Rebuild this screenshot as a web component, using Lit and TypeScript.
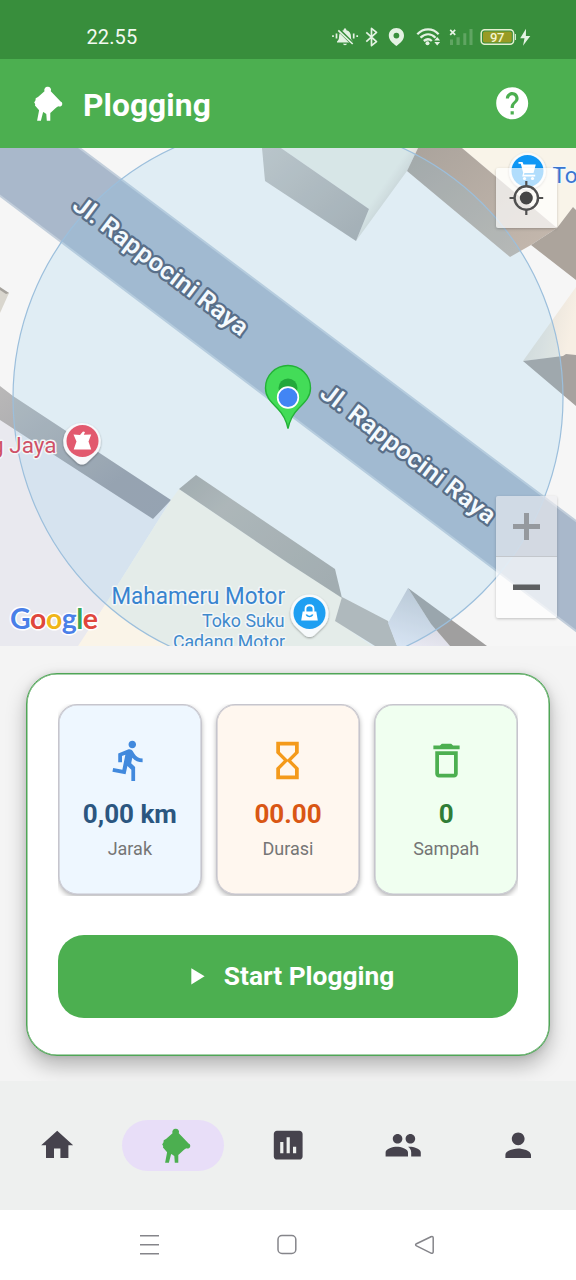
import { LitElement, html, css, svg } from "lit";
import { customElement, property } from "lit/decorators.js";

const PLOGGER =
  "M13.8 2.200a3.200 3.200 0 0 1 3.200 4.400L26.800 17c1.300.3 1.900 1.500 1.600 2.800-.4 1.800-2.300 2.600-3.900 1.800l-2 1.400-6 5.400v7.700h-3.500l-.5-6.600-2.900-2.200-.4.5-2.100 8.300H3.300L5.300 25.600 1.200 20.800l.2-1.300-1-1.700 1.300-2.200.2-1.900 2.300-1.400 6.500-5.700a3.200 3.200 0 0 1 3.100-4.400z";

const ICONS: Record<string, string> = {
  run: "M13.49 5.48c1.1 0 2-.9 2-2s-.9-2-2-2-2 .9-2 2 .9 2 2 2zm-3.6 13.9l1-4.4 2.1 2v6h2v-7.500l-2.1-2 .6-3c1.300 1.500 3.300 2.500 5.500 2.500v-2c-1.900 0-3.500-1-4.300-2.400l-1-1.600c-.4-.6-1-1-1.700-1-.3 0-.5.1-.8.1l-5.200 2.200v4.700h2v-3.400l1.800-.7-1.600 8.100-4.900-1-.4 2 7 1.400z",
  hourglass: "M6 2v6h.01L6 8.010 10 12l-4 4 .01.01H6V22h12v-5.990h-.01L18 16l-4-4 4-3.990-.01-.01H18V2H6zm10 14.500V20H8v-3.500l4-4 4 4zm-4-5l-4-4V4h8v3.500l-4 4z",
  trash: "M6 19c0 1.100.9 2 2 2h8c1.100 0 2-.9 2-2V7H6v12zM8 9h8v10H8V9zm7.500-5l-1-1h-5l-1 1H5v2h14V4z",
  home: "M10 20v-6h4v6h5v-8h3L12 3 2 12h3v8z",
  chart: "M19 3H5c-1.100 0-2 .9-2 2v14c0 1.100.9 2 2 2h14c1.100 0 2-.9 2-2V5c0-1.100-.9-2-2-2zM9 17H7v-7h2v7zm4 0h-2V7h2v10zm4 0h-2v-4h2v4z",
  people: "M16.5 11c1.660 0 2.990-1.340 2.990-3S18.160 5 16.500 5c-1.660 0-3 1.340-3 3s1.340 3 3 3zm-8 0c1.660 0 2.990-1.340 2.990-3S10.160 5 8.500 5c-1.660 0-3 1.340-3 3s1.340 3 3 3zm-.5 2c-2.330 0-7 1.170-7 3.500V19h14v-2.500c0-2.330-4.670-3.500-7-3.500zm8 0c-.29 0-.62.02-.97.05 1.160.84 1.970 1.970 1.970 3.450V19h6v-2.500c0-2.330-4.670-3.500-7-3.500z",
  person: "M12 12c2.210 0 4-1.790 4-4s-1.790-4-4-4-4 1.790-4 4 1.790 4 4 4zm0 2c-2.670 0-8 1.340-8 4v2h16v-2c0-2.660-5.330-4-8-4z",
  help: "M12 2C6.480 2 2 6.480 2 12s4.480 10 10 10 10-4.480 10-10S17.520 2 12 2zm1 17h-2v-2h2v2zm2.070-7.750l-.9.92C13.450 12.900 13 13.500 13 15h-2v-.5c0-1.100.45-2.100 1.170-2.830l1.240-1.260c.37-.36.59-.86.59-1.410 0-1.100-.9-2-2-2s-2 .9-2 2H8c0-2.210 1.790-4 4-4s4 1.790 4 4c0 .88-.36 1.680-.93 2.250z",
};

@customElement("ui-icon")
class UiIcon extends LitElement {
  @property() name = "";
  static styles = css`
    :host { display: block; width: 38.4px; height: 38.4px; }
    svg { display: block; width: 100%; height: 100%; fill: currentColor; }
  `;
  render() {
    return this.name === "plogger"
      ? html`<svg viewBox="-7.800 -.6 38.400 38.400"><path d=${PLOGGER}></path></svg>`
      : html`<svg viewBox="0 0 24 24"><path d=${ICONS[this.name]}></path></svg>`;
  }
}

@customElement("status-bar")
class StatusBar extends LitElement {
  static styles = css`
    :host {
      display: flex; justify-content: space-between; align-items: center;
      box-sizing: border-box; height: 59px; padding: 15px 44px 0 86.500px;
      background: #388e3c; color: #f2faf1; font: 400 20px Roboto, sans-serif;
    }
    .time { letter-spacing: 0.1px; }
    svg { display: block; }
    .pct { font: 500 13px Roboto, sans-serif; fill: #f2f6d0; }
  `;
  render() {
    return html`<span class="time">22.55</span>
      <svg width="202" height="24" viewBox="330 25 202 24" fill="#e4f2e3">
        <path d="M337 41.500c1.500-1.200 2-2.300 2-4.500 0-4 1.600-6 4.600-6.800 0-2.700 2.800-2.700 2.800 0 3 .8 4.600 2.800 4.600 6.800 0 2.200.5 3.300 2 4.500v.9h-16zM343 43.800h4c-.4 1.900-3.600 1.900-4 0z"></path>
        <path d="M338.500 29.500l14.500 14.500" stroke="#388e3c" stroke-width="3.600"></path>
        <path d="M338.300 30.300l14.400 13.700M336.500 33.500v5M333 35.300v1.600M353.700 33.500v5M357.200 35.300v1.600" stroke="#e4f2e3" stroke-width="1.700" fill="none"></path>
        <path d="M366.300 32.300l10.200 9.300-5 4V28.400l5 4-10.200 9.300" stroke="#e4f2e3" stroke-width="1.700" fill="none" stroke-linejoin="round"></path>
        <path fill-rule="evenodd" d="M396.400 28c-4.400 0-7.600 3.200-7.600 7.500 0 4.800 4 7.600 7.600 10.500 3.600-2.900 7.600-5.700 7.600-10.500 0-4.300-3.200-7.500-7.600-7.500zm0 4.700a2.900 2.900 0 1 1 0 5.800 2.900 2.900 0 0 1 0-5.800z"></path>
        <g fill="none" stroke="#e4f2e3" stroke-width="2.300"><path d="M417.300 34.200c6.300-6.400 15.400-6.400 21.300 0M420.500 37.700c4.800-4.500 10.500-4.500 15 0M423.800 41c3-2.500 5.500-2.500 8 0"></path></g>
        <circle cx="427.500" cy="43.300" r="2"></circle>
        <path stroke="#388e3c" stroke-width="1" paint-order="stroke" d="M434.300 40.500l2.900-3.500 2.900 3.500zM434.300 42l2.900 3.500 2.900-3.500z"></path>
        <path d="M450.200 29.800l5 5m0-5l-5 5" stroke="#e4f2e3" stroke-width="1.700"></path>
        <path fill="#60a562" d="M450 39.500h3v5.500h-3zM456.500 37.300h3.200V45h-3.200zM463.300 33.200h3V45h-3zM469.500 29h3v16h-3z"></path>
        <rect x="481.200" y="29.700" width="32.400" height="14.600" rx="3.500" fill="none" stroke="#e6f0d0" stroke-width="1.500"></rect>
        <rect x="483" y="31.500" width="28.800" height="11" rx="1.800" fill="#989b25"></rect>
        <path d="M514.900 34h1v6h-1z"></path>
        <text class="pct" x="497.200" y="41.700" text-anchor="middle" textLength="14.500">97</text>
        <path d="M526 28.800l-5.800 9.400h4.300l-1.500 7.500 7.300-9.800h-4.400z"></path>
      </svg>`;
  }
}

@customElement("app-bar")
class AppBar extends LitElement {
  static styles = css`
    :host {
      display: flex; align-items: center; box-sizing: border-box;
      height: 89px; padding: 0 45px 0 26px; background: #4caf50; color: #fff;
    }
    h1 { flex: 1; margin: 3px 0 0 18.500px; font: 700 31.700px Roboto, sans-serif; letter-spacing: 0.1px; }
  `;
  render() {
    return html`<ui-icon name="plogger"></ui-icon><h1>Plogging</h1><ui-icon name="help"></ui-icon>`;
  }
}

@customElement("map-view")
class MapView extends LitElement {
  static styles = css`
    :host { display: block; position: relative; height: 498px; overflow: hidden; background: #f6f6f6; }
    .canvas { display: block; width: 576px; height: 498px; }
    .street { font: 600 25px Roboto, sans-serif; fill: #f4fafe; stroke: #596f89; stroke-width: 4.500px; stroke-linejoin: round; paint-order: stroke; }
    .place { font-family: Roboto, sans-serif; stroke: #f3f7f8; stroke-width: 3px; stroke-linejoin: round; paint-order: stroke; }
    .logo { font: 700 28.500px Lato, sans-serif; stroke: #fff; stroke-width: 3px; stroke-linejoin: round; paint-order: stroke; }
    .control { position: absolute; right: 19px; width: 61px; box-shadow: 0 1px 3px rgba(0, 0, 0, 0.22); border-radius: 2px; overflow: hidden; }
    .control svg { display: block; }
    .locate { top: 20px; height: 60px; background: rgba(255, 255, 255, 0.68); }
    .zoom { top: 348px; height: 122px; }
    .in { height: 60px; background: rgba(238, 238, 240, 0.62); border-bottom: 1px solid #c3c7cc; }
    .out { height: 61px; background: rgba(255, 255, 255, 0.7); }
  `;
  render() {
    return html`
      <svg class="canvas" viewBox="0 148 576 498">
        <defs>
          <linearGradient id="wallA" x1="0" y1="0" x2="1" y2="1"><stop offset="0" stop-color="#c6c5c3"></stop><stop offset="1" stop-color="#aaa9a9"></stop></linearGradient>
          <linearGradient id="wallB" x1="0" y1="0" x2="1" y2="1"><stop offset="0" stop-color="#aaa39c"></stop><stop offset="1" stop-color="#c6b9ae"></stop></linearGradient>
          <linearGradient id="wallC" x1="0" y1="0" x2="1" y2="1"><stop offset="0" stop-color="#b9b8b8"></stop><stop offset=".7" stop-color="#9c9ca4"></stop><stop offset="1" stop-color="#9a9ba5"></stop></linearGradient>
          <linearGradient id="wallE" x1="0" y1="0" x2="1" y2=".8"><stop offset="0" stop-color="#a8a6a2"></stop><stop offset=".3" stop-color="#b7b3ae"></stop><stop offset="1" stop-color="#aaa8a4"></stop></linearGradient>
          <linearGradient id="roofC" x1="0" y1="0" x2="1" y2=".3"><stop offset="0" stop-color="#dcdad5"></stop><stop offset="1" stop-color="#f7efe4"></stop></linearGradient>
          <linearGradient id="roofG" x1=".6" y1="0" x2=".3" y2="1"><stop offset="0" stop-color="#c5c8d0"></stop><stop offset="1" stop-color="#e9e9f3"></stop></linearGradient>
          <linearGradient id="edge" gradientUnits="userSpaceOnUse" x1="387" y1="201" x2="377" y2="194"><stop offset="0" stop-color="#dcdcd7"></stop><stop offset="1" stop-color="#ebede6"></stop></linearGradient>
          <filter id="lift" x="-30%" y="-30%" width="160%" height="160%"><feDropShadow dx="0" dy="1" stdDeviation="1.200" flood-opacity=".35"></feDropShadow></filter>
        </defs>
        <path fill="#a9b8cb" stroke="#c2cedb" stroke-width="2" d="M-5 140H69l515 387v110L-5 192z"></path>

        <path fill="url(#edge)" d="M281 148l88 61-13 32 51-70 11-23z"></path>
        <path fill="url(#wallA)" d="M262 148l3 33 91 60 13-32-88-61z"></path>
        <path fill="#f9f4e9" d="M462 148l95 80 16-21 3 2v-61z"></path>
        <path fill="url(#wallB)" d="M418 148l-11 23 103 86 21-12 26-17-95-80z"></path>
        <path fill="#aca49c" d="M531 245l26-17 16-21 3 3v70z"></path>
        <path fill="url(#roofC)" d="M523 361l53-74v68z"></path>
        <path fill="#a6a29f" d="M523 361l40-5 3-2 10 1v51z"></path>
        <path fill="#d9d6ce" d="M0 288l9 5-9 20z"></path><path fill="#a5a29c" d="M0 287l9 6-3 1-6-4z"></path>

        <path fill="#e9e9ef" d="M0 418l153 101 18-19-66 105-25 41H0z"></path>
        <path fill="url(#wallC)" d="M0 386l13 10 158 104-18 19L0 420z"></path>
        <path fill="#faf4e8" d="M179 489l-8 11-66 105-27 41h294l-34-24 4-25-54-34z"></path>
        <path fill="url(#wallE)" d="M179 489l17-14 139 94 7 29-54-35z"></path>
        <path fill="#bab6b2" d="M342 597l46 24 9 25h-22l-40-25z"></path>
        <path fill="url(#roofG)" d="M408 588l-20 35 9 23h53l-19-22z"></path>
        <path fill="#a09f9f" d="M408 588l79 58h-37l-19-22z"></path>

        <circle cx="288" cy="398" r="275" fill="rgba(126,198,240,.18)" stroke="#9cbfdc" stroke-width="1.200"></circle>

        <text class="street" transform="translate(71 208) rotate(37.200)" textLength="213" lengthAdjust="spacingAndGlyphs">Jl. Rappocini Raya</text>
        <text class="street" transform="translate(318.500 396) rotate(37.200)" textLength="213" lengthAdjust="spacingAndGlyphs">Jl. Rappocini Raya</text>

        <path fill="#43dc58" stroke="#23b237" stroke-width="1.400" d="M288 428.500c-1.800-9-4.500-14-10.500-20-7.500-7.500-12-12-12-20.500a22.500 22.500 0 0 1 45 0c0 8.500-4.500 13-12 20.500-6 6-8.700 11-10.500 20z"></path>
        <circle cx="288" cy="388" r="9.500" fill="#22a83a"></circle>
        <circle cx="288" cy="397.500" r="10.300" fill="#4285f4" stroke="#fff" stroke-width="1.700"></circle>

        <text class="place" x="56.500" y="453" text-anchor="end" font-size="22.500" fill="#cf5167">g Jaya</text>
        <g filter="url(#lift)"><path fill="#f7f8fb" d="M82 423a18.500 18.500 0 0 1 13 32l-8 7.500c-3 2.800-7 2.800-10 0l-8-7.500a18.500 18.500 0 0 1 13-32z"></path></g>
        <circle cx="82.500" cy="441" r="16" fill="#e2596e"></circle>
        <path fill="#fff" d="M73.500 434.500l6.500.6 3-3.600 2 .5-1.200 2.800 7.400-.3-2.700 7 2.700 8h-17.500l2.800-8z"></path>

        <text class="place" x="111.500" y="604" font-size="23" fill="#3884cf" textLength="173.500" lengthAdjust="spacingAndGlyphs">Mahameru Motor</text>
        <text class="place" x="202" y="626.500" font-size="18" fill="#4089cc" textLength="82.500" lengthAdjust="spacingAndGlyphs">Toko Suku</text>
        <text class="place" x="173" y="647.500" font-size="18" fill="#4089cc" textLength="112" lengthAdjust="spacingAndGlyphs">Cadang Motor</text>
        <g filter="url(#lift)"><path fill="#f7fafc" d="M309.500 594.500a19 19 0 0 1 13 33l-8 7.500c-3 2.800-7 2.800-10 0l-8-7.500a19 19 0 0 1 13-33z"></path></g>
        <circle cx="309.500" cy="613" r="16" fill="#1e9ff2"></circle>
        <path fill="#fff" d="M302.700 611.500h13.600l1.500 9h-16.600z"></path>
        <path fill="none" stroke="#fff" stroke-width="1.800" d="M305.500 612v-3c0-5 8-5 8 0v3"></path>
        <path fill="none" stroke="#1e9ff2" stroke-width="1.600" d="M306.300 614.500c1 2.600 5.400 2.600 6.400 0"></path>

        <g filter="url(#lift)"><circle cx="527.500" cy="171" r="18.500" fill="#f8fafb"></circle></g>
        <circle cx="527.500" cy="171" r="16" fill="#0f97f5"></circle>
        <path fill="#fff" d="M518.500 162h4l1 2.500h12.300l-2.300 8.500h-9l-.7 1.800h11.400v1.700h-13l1-3.800-2.400-9h-2.300z"></path>
        <circle cx="524.500" cy="178.500" r="1.600" fill="#fff"></circle><circle cx="532.500" cy="178.500" r="1.600" fill="#fff"></circle>
        <text class="place" x="552.500" y="182.500" font-size="22.500" fill="#3a76d2">To</text>

        <text class="logo" x="10" y="628.500" textLength="88"><tspan fill="#4a80e8">G</tspan><tspan fill="#e0473d">o</tspan><tspan fill="#f0b619">o</tspan><tspan fill="#4a80e8">g</tspan><tspan fill="#3aa757">l</tspan><tspan fill="#e0473d">e</tspan></text>
      </svg>
      <div class="control locate">
        <svg width="61" height="60" viewBox="0 0 61 60" fill="none" stroke="#505050">
          <circle cx="30.300" cy="30" r="11.700" stroke-width="2.400"></circle><circle cx="30.300" cy="30" r="6.500" fill="#454545" stroke="none"></circle>
          <path stroke-width="2.200" d="M13.500 30h5M42 30h5.200M30.300 13v5.500M30.300 41.500v5.500"></path>
        </svg>
      </div>
      <div class="control zoom">
        <div class="in"><svg width="61" height="60"><path fill="#95999e" d="M17 28h27v5H17zM28 17h5v27h-5z"></path></svg></div>
        <div class="out"><svg width="61" height="61"><path fill="#5d5f61" d="M17 27.500h27v5.500H17z"></path></svg></div>
      </div>`;
  }
}

@customElement("stat-card")
class StatCard extends LitElement {
  @property() icon = "";
  @property() value = "";
  @property() label = "";
  static styles = css`
    :host {
      display: flex; flex-direction: column; align-items: center; box-sizing: border-box;
      height: 191px; padding-top: 33px; border: 1px solid #c6c5cd; border-radius: 19px;
      box-shadow: inset 0 0 0 0.6px #c6c5cd, 0 2px 5px rgba(0, 0, 0, 0.28); font-family: Roboto, sans-serif;
    }
    :host([icon="run"]) { background: #eef7ff; color: #4189dd; --value: #2b5680; }
    :host([icon="hourglass"]) { background: #fff7ef; color: #f49a1b; --value: #d95714; }
    :host([icon="trash"]) { background: #f0fff0; color: #4caf50; --value: #2f7d36; }
    ui-icon { width: 45px; height: 45px; }
    .value { margin-top: 16px; font-size: 26px; line-height: 30px; font-weight: 700; color: var(--value); }
    .label { margin-top: 9px; font-size: 18px; line-height: 22px; color: #757575; }
  `;
  render() {
    return html`<ui-icon name=${this.icon}></ui-icon><div class="value">${this.value}</div><div class="label">${this.label}</div>`;
  }
}

@customElement("bottom-nav")
class BottomNav extends LitElement {
  static styles = css`
    :host {
      display: grid; grid-template-columns: repeat(5, 1fr); justify-items: center; box-sizing: border-box;
      height: 129px; padding-top: 39px; background: #eef0ef; color: #46434d;
    }
    .item { display: flex; align-items: center; justify-content: center; width: 102.500px; height: 51px; border-radius: 26px; }
    .active { background: #e8def8; color: #4caf50; }
  `;
  render() {
    return ["home", "plogger", "chart", "people", "person"].map(
      (n) => html`<div class="item ${n === "plogger" ? "active" : ""}"><ui-icon name=${n}></ui-icon></div>`
    );
  }
}

@customElement("app-root")
class AppRoot extends LitElement {
  static styles = css`
    :host { display: flex; flex-direction: column; width: 576px; height: 1280px; overflow: hidden; background: #fff; }
    .panel { box-sizing: border-box; height: 435px; padding: 26.500px 26px 0; background: #f4f4f4; overflow: hidden; }
    .card {
      box-sizing: border-box; height: 383px; padding: 30.500px 31px 0; background: #fff;
      border: 1px solid #4fa556; border-radius: 31px;
      box-shadow: inset 0 0 0 0.5px #4fa556, 0 10px 20px rgba(0, 0, 0, 0.26), 0 0 7px rgba(0, 0, 0, 0.1);
    }
    .stats { display: grid; grid-template-columns: repeat(3, 1fr); gap: 14.500px; height: 192px; overflow: hidden; }
    .start {
      display: flex; align-items: center; justify-content: center; width: 100%; height: 83px; box-sizing: border-box;
      margin-top: 38.500px; padding: 0 0 0 9px; border: 0; border-radius: 26px; background: #4caf50; color: #fff;
      font: 700 26.300px Roboto, sans-serif; gap: 19px;
    }
    .start svg { display: block; }
    .system { display: block; height: 70px; background: #fff; }
  `;
  render() {
    return html`
      <status-bar></status-bar>
      <app-bar></app-bar>
      <map-view></map-view>
      <section class="panel">
        <div class="card">
          <div class="stats">
            <stat-card icon="run" value="0,00 km" label="Jarak"></stat-card>
            <stat-card icon="hourglass" value="00.00" label="Durasi"></stat-card>
            <stat-card icon="trash" value="0" label="Sampah"></stat-card>
          </div>
          <button class="start">
            <svg width="14" height="17" viewBox="0 0 14 17">${svg`<path fill="#fff" d="M.3.2v16.300l13.300-8.200z"></path>`}</svg>
            <span>Start Plogging</span>
          </button>
        </div>
      </section>
      <bottom-nav></bottom-nav>
      <svg class="system" width="576" height="70" viewBox="0 1210 576 70" fill="none" stroke="#85858a" stroke-width="1.500">
        <path d="M140 1235.700h19M140 1244.700h19M140 1253.700h19"></path>
        <rect x="278" y="1235.500" width="17.800" height="18" rx="4"></rect>
        <path d="M431 1236.700l-14.500 7c-1.200.7-1.200 1.500 0 2.200l14.500 7.200c1.300.5 2.200 0 2.200-1.300v-13.800c0-1.300-.9-1.900-2.200-1.300z"></path>
      </svg>`;
  }
}
